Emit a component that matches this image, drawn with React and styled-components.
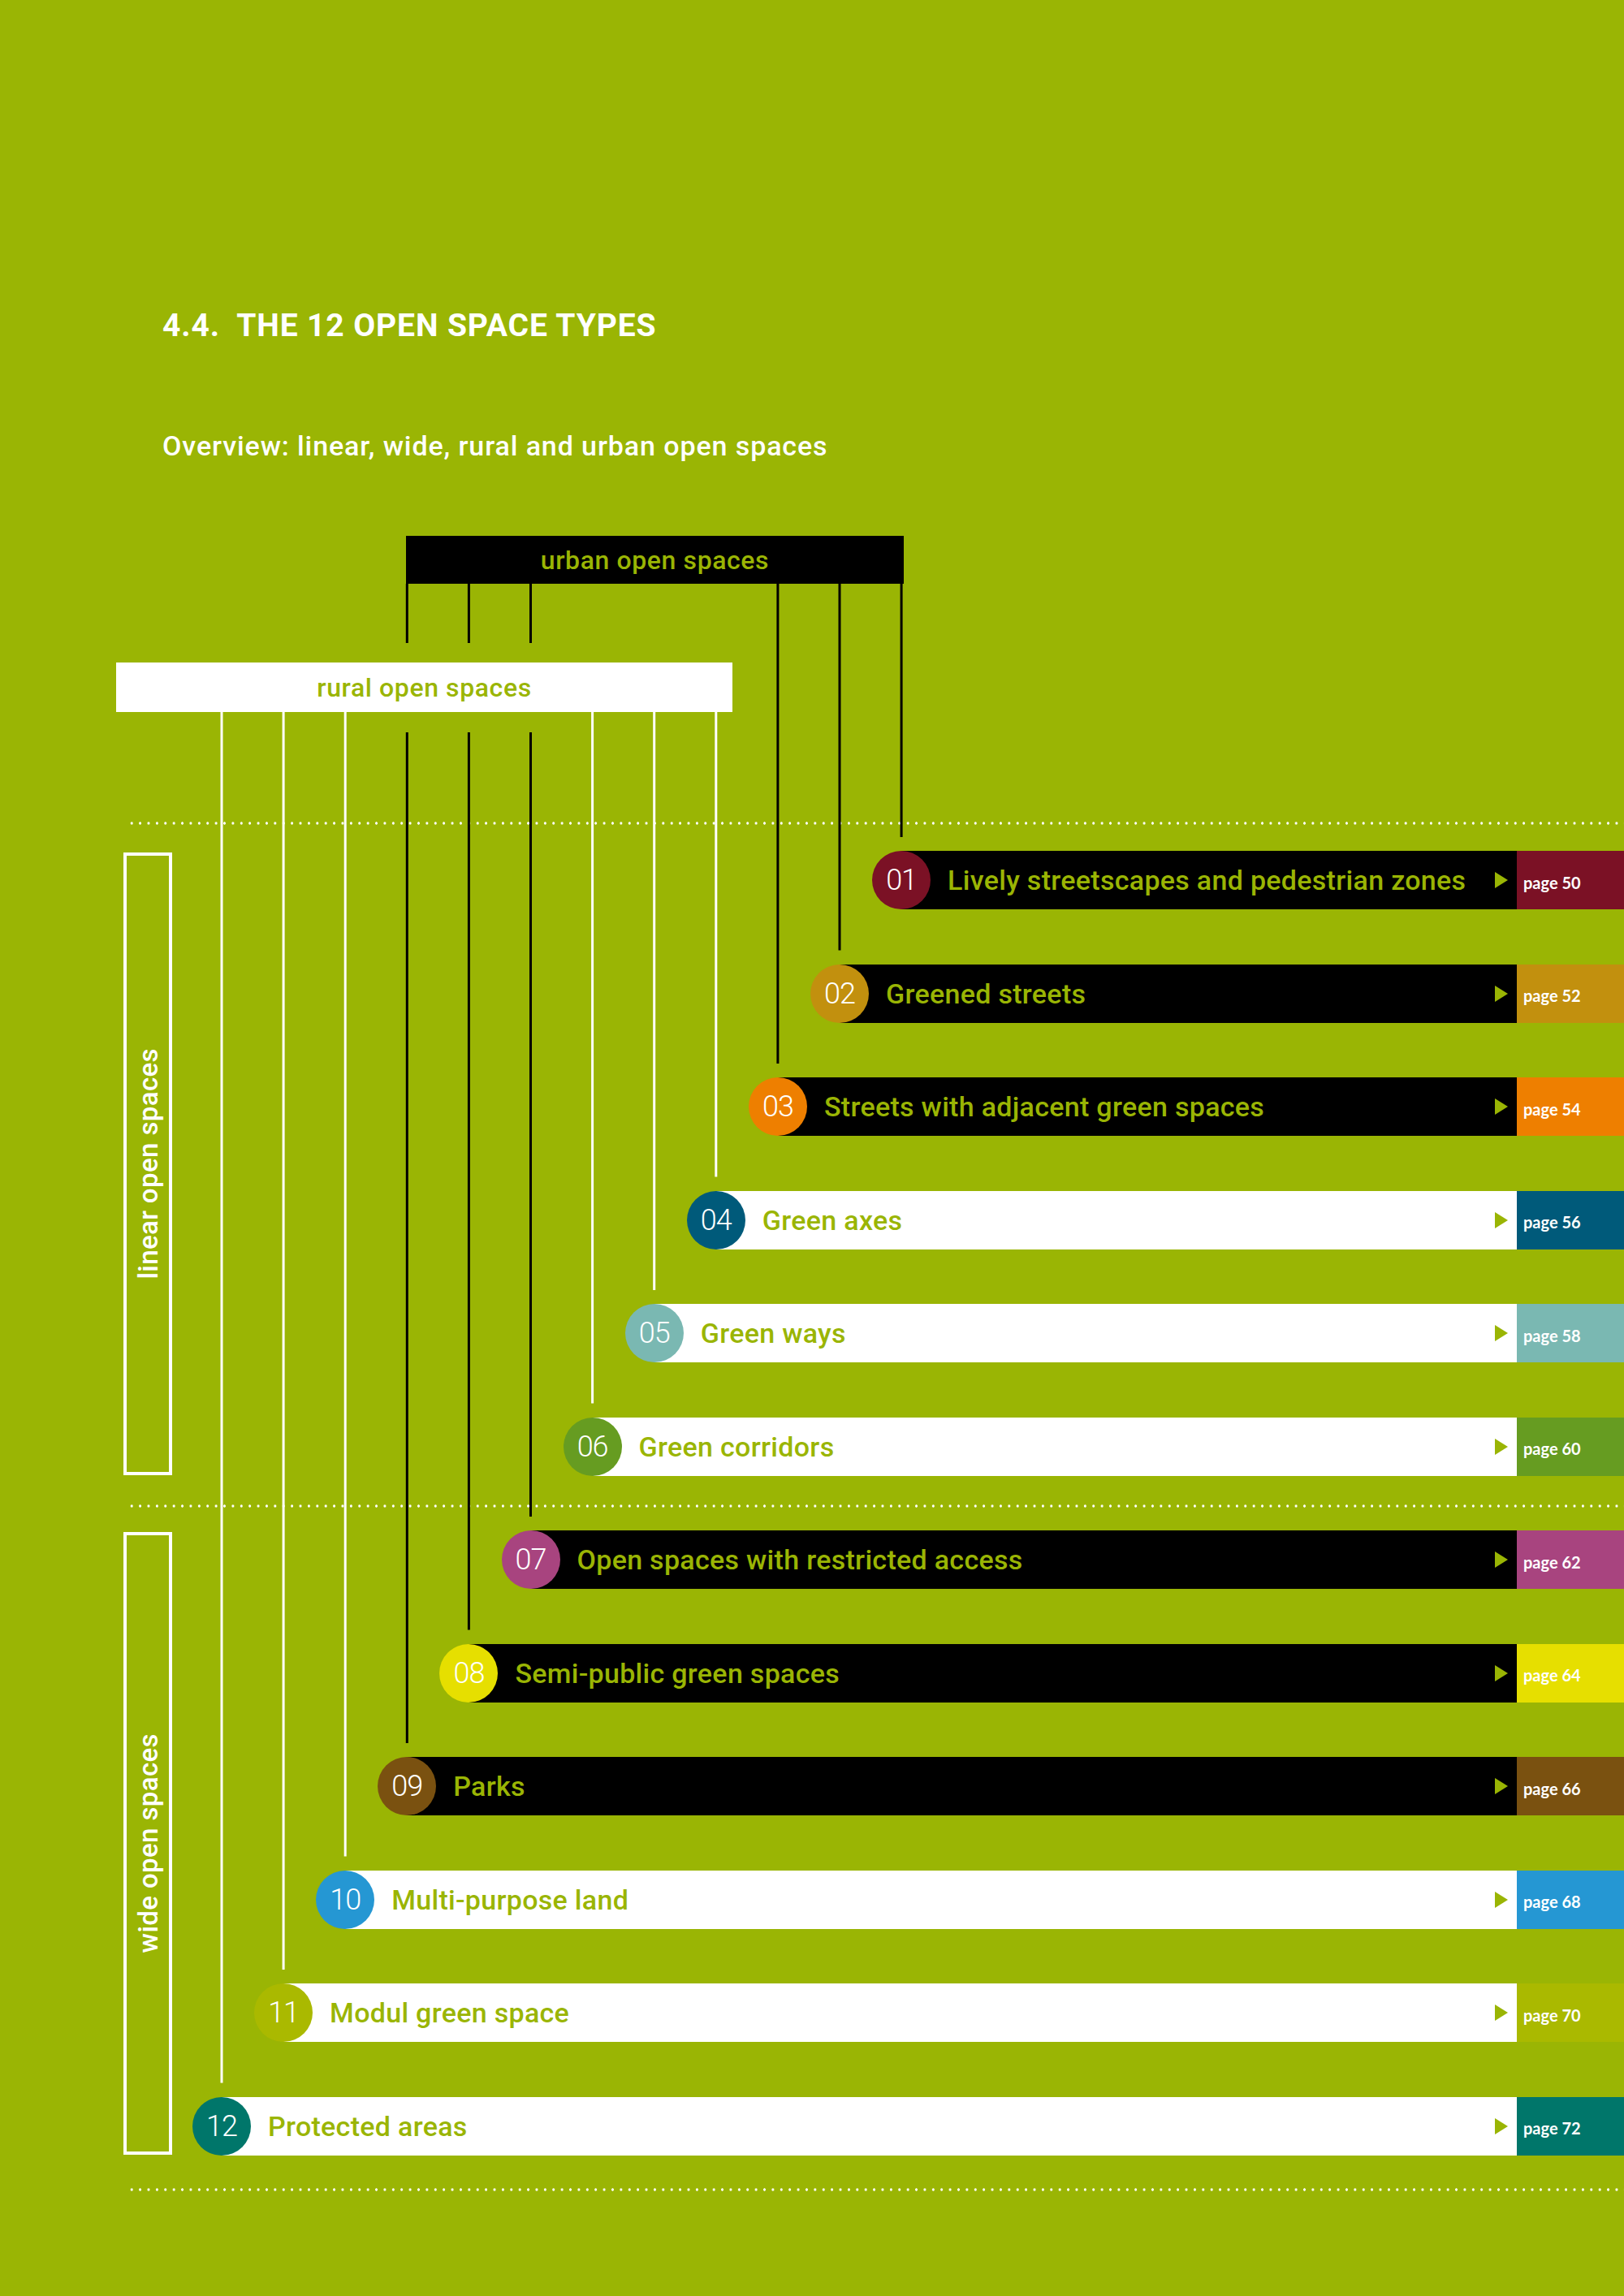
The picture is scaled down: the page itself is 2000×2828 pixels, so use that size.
import React from "react";
import styled, { createGlobalStyle } from "styled-components";

const GREEN = "#9ab504";

const GlobalStyle = createGlobalStyle`
  html, body { margin: 0; padding: 0; background: ${GREEN}; }
  body { font-family: Roboto, "Liberation Sans", sans-serif; }
`;

const Page = styled.div`
  width: 2000px;
  min-height: 2828px;
  background: ${GREEN};
  overflow: hidden;
`;

const Header = styled.header`
  padding: 378px 0 0 200px;
`;

const Title = styled.h1`
  margin: 0;
  font-family: Roboto, "Liberation Sans", sans-serif;
  font-weight: 700;
  font-size: 39px;
  line-height: 46px;
  letter-spacing: 0.9px;
  color: #fff;
  white-space: pre;
`;

const Subtitle = styled.h2`
  margin: 105px 0 0 0;
  font-family: Roboto, "Liberation Sans", sans-serif;
  font-weight: 500;
  font-size: 34px;
  line-height: 40px;
  letter-spacing: 0.9px;
  color: #fff;
`;

const Diagram = styled.section`
  position: relative;
  margin-top: 91px;
  padding-bottom: 120px;
`;

const CategoryBar = styled.div`
  margin-left: ${(p) => p.$left}px;
  margin-top: ${(p) => p.$top || 0}px;
  width: ${(p) => p.$width}px;
  height: ${(p) => p.$height}px;
  background: ${(p) => (p.$dark ? "#000" : "#fff")};
  color: ${GREEN};
  display: flex;
  align-items: center;
  justify-content: center;
  font-family: Roboto, "Liberation Sans", sans-serif;
  font-weight: 500;
  font-size: 32px;
  letter-spacing: 0.6px;
`;

const Dotted = styled.div`
  margin-left: 157px;
  margin-top: ${(p) => p.$top}px;
  height: 4px;
  background-image: radial-gradient(circle at center, #fff 1.4px, transparent 1.9px);
  background-size: 10.4px 4px;
  background-repeat: repeat-x;
`;

const Group = styled.div`
  display: flex;
  margin-top: ${(p) => p.$top}px;
`;

const SideBox = styled.div`
  margin: 2px 0 1px 152px;
  width: 60px;
  box-sizing: border-box;
  border: 4px solid #fff;
  display: flex;
  align-items: center;
  justify-content: center;
  flex-shrink: 0;
`;

const SideText = styled.span`
  writing-mode: vertical-rl;
  transform: rotate(180deg);
  color: #fff;
  font-family: Roboto, "Liberation Sans", sans-serif;
  font-weight: 500;
  font-size: 33px;
  letter-spacing: 0.4px;
  white-space: nowrap;
`;

const Rows = styled.div`
  flex: 1;
  display: flex;
  flex-direction: column;
  gap: 67.5px;
`;

const Row = styled.div`
  height: 72px;
  margin-left: ${(p) => p.$indent}px;
  display: flex;
  align-items: center;
  background: linear-gradient(to right, transparent 36px, ${(p) => p.$bar} 36px);
`;

const Circle = styled.div`
  width: 72px;
  height: 72px;
  border-radius: 50%;
  background: ${(p) => p.$color};
  flex-shrink: 0;
  display: flex;
  align-items: center;
  justify-content: center;
  color: #fff;
  font-family: Roboto, "Liberation Sans", sans-serif;
  font-weight: 300;
  font-size: 36px;
  letter-spacing: -1px;
`;

const Label = styled.span`
  flex: 1;
  margin-left: 21px;
  color: ${GREEN};
  font-family: Roboto, "Liberation Sans", sans-serif;
  font-weight: 500;
  font-size: 34px;
  letter-spacing: 0.3px;
  white-space: nowrap;
`;

const Arrow = styled.span`
  width: 0;
  height: 0;
  border-left: 16px solid ${GREEN};
  border-top: 10px solid transparent;
  border-bottom: 10px solid transparent;
  margin-right: 11px;
`;

const PageBox = styled.div`
  width: 132px;
  align-self: stretch;
  box-sizing: border-box;
  background: ${(p) => p.$color};
  display: flex;
  align-items: center;
  padding: 5px 0 0 8px;
  color: #fff;
  font-family: Lato, "Open Sans", sans-serif;
  font-weight: 700;
  font-size: 20px;
`;

const Connectors = styled.svg`
  position: absolute;
  top: 0;
  left: 0;
  pointer-events: none;
`;

const types = [
  { n: "01", label: "Lively streetscapes and pedestrian zones", page: 50, color: "#7b1125", urban: true },
  { n: "02", label: "Greened streets", page: 52, color: "#c2900e", urban: true },
  { n: "03", label: "Streets with adjacent green spaces", page: 54, color: "#ee7f00", urban: true },
  { n: "04", label: "Green axes", page: 56, color: "#005a7a", urban: false },
  { n: "05", label: "Green ways", page: 58, color: "#7ab8b2", urban: false },
  { n: "06", label: "Green corridors", page: 60, color: "#669c21", urban: false },
  { n: "07", label: "Open spaces with restricted access", page: 62, color: "#a8447f", urban: true },
  { n: "08", label: "Semi-public green spaces", page: 64, color: "#e6df00", urban: true },
  { n: "09", label: "Parks", page: 66, color: "#7a5110", urban: true },
  { n: "10", label: "Multi-purpose land", page: 68, color: "#2597d3", urban: false },
  { n: "11", label: "Modul green space", page: 70, color: "#aab900", urban: false },
  { n: "12", label: "Protected areas", page: 72, color: "#00766a", urban: false },
];

const STEP_X = 76.1;
const STEP_Y = 139.5;
const ROWS_LEFT = 212;
const FIRST_ROW_TOP = 388; // relative to diagram top
const indentOf = (i) => 25 + (11 - i) * STEP_X;
const centerOf = (i) => ROWS_LEFT + indentOf(i) + 36;
const rowTopOf = (i) => FIRST_ROW_TOP + i * STEP_Y;

const URBAN_BOTTOM = 59;
const RURAL_TOP = 156;
const RURAL_BOTTOM = 217;

function TypeRow({ t, i }) {
  return (
    <Row $indent={indentOf(i)} $bar={t.urban ? "#000" : "#fff"}>
      <Circle $color={t.color}>{t.n}</Circle>
      <Label>{t.label}</Label>
      <Arrow />
      <PageBox $color={t.color}>page {t.page}</PageBox>
    </Row>
  );
}

function ConnectorLines() {
  const segs = [];
  types.forEach((t, i) => {
    const x = centerOf(i);
    const end = rowTopOf(i) - 17;
    if (t.urban) {
      if (i >= 6) {
        segs.push({ x, y1: URBAN_BOTTOM, y2: RURAL_TOP - 24, c: "#000" });
        segs.push({ x, y1: RURAL_BOTTOM + 25, y2: end, c: "#000" });
      } else {
        segs.push({ x, y1: URBAN_BOTTOM, y2: end, c: "#000" });
      }
    } else {
      segs.push({ x, y1: RURAL_BOTTOM, y2: end, c: "#fff" });
    }
  });
  return (
    <Connectors width="2000" height="2100" viewBox="0 0 2000 2100">
      {segs.map((s, k) => (
        <line key={k} x1={s.x} x2={s.x} y1={s.y1} y2={s.y2} stroke={s.c} strokeWidth="3" />
      ))}
    </Connectors>
  );
}

export default function App() {
  return (
    <>
      <GlobalStyle />
      <Page>
        <Header>
          <Title>{"4.4.  THE 12 OPEN SPACE TYPES"}</Title>
          <Subtitle>Overview: linear, wide, rural and urban open spaces</Subtitle>
        </Header>
        <Diagram>
          <CategoryBar $dark $left={500} $width={613} $height={59}>
            urban open spaces
          </CategoryBar>
          <CategoryBar $left={143} $top={97} $width={759} $height={61}>
            rural open spaces
          </CategoryBar>
          <Dotted $top={135} />
          <Group $top={32}>
            <SideBox>
              <SideText>linear open spaces</SideText>
            </SideBox>
            <Rows>
              {types.slice(0, 6).map((t, i) => (
                <TypeRow key={t.n} t={t} i={i} />
              ))}
            </Rows>
          </Group>
          <Dotted $top={35.5} />
          <Group $top={28}>
            <SideBox>
              <SideText>wide open spaces</SideText>
            </SideBox>
            <Rows>
              {types.slice(6).map((t, i) => (
                <TypeRow key={t.n} t={t} i={i + 6} />
              ))}
            </Rows>
          </Group>
          <Dotted $top={40.5} />
          <ConnectorLines />
        </Diagram>
      </Page>
    </>
  );
}
